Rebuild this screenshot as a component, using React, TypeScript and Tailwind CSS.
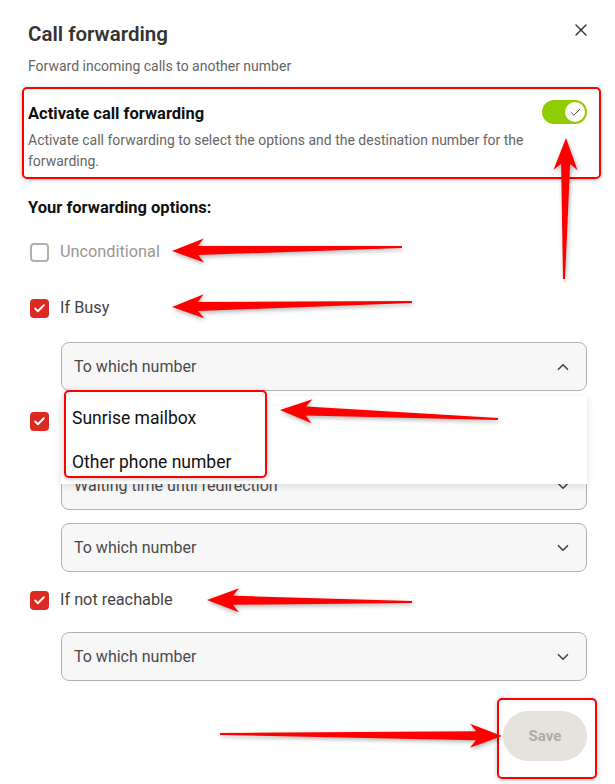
import { X, ChevronDown, ChevronUp, Check } from "lucide-react";

function arrowPoints(tx: number, ty: number, ex: number, ey: number) {
  const dx = ex - tx;
  const dy = ey - ty;
  const len = Math.hypot(dx, dy);
  const ux = dx / len;
  const uy = dy / len;
  const nx = -uy;
  const ny = ux;
  const p = (d: number, w: number) => `${tx + ux * d + nx * w},${ty + uy * d + ny * w}`;
  return [
    p(0, 0),
    p(32, 12),
    p(26, 4.5),
    p(len, 1),
    p(len, -1),
    p(26, -4.5),
    p(32, -12),
  ].join(" ");
}

const arrows = [
  [172, 251, 402, 247],
  [172, 307, 412, 302],
  [280, 410, 498, 419],
  [207, 600, 412, 602],
  [502, 736, 220, 734],
  [566, 138, 564, 279],
];

function Checkbox({ checked }: { checked: boolean }) {
  return checked ? (
    <span className="flex h-[19px] w-[19px] items-center justify-center rounded-[4px] bg-[#dc2a22]">
      <Check size={13} strokeWidth={3.5} className="text-white" />
    </span>
  ) : (
    <span className="h-[19px] w-[19px] rounded-[4px] border-2 border-[#b3b0ab] bg-white" />
  );
}

function Select({ label, open }: { label: string; open?: boolean }) {
  return (
    <div className="flex h-[49px] items-center justify-between rounded-lg border-[1.5px] border-[#b5b2ad] bg-[#f7f7f7] pl-[12px] pr-[14px]">
      <span className="text-[16px] text-[#4a4a4a]">{label}</span>
      {open ? (
        <ChevronUp size={18} strokeWidth={2.2} className="text-[#444]" />
      ) : (
        <ChevronDown size={18} strokeWidth={2.2} className="text-[#444]" />
      )}
    </div>
  );
}

function Option({ label, checked, muted }: { label: string; checked: boolean; muted?: boolean }) {
  return (
    <div className="flex h-6 items-center gap-[11px] pl-[2px]">
      <Checkbox checked={checked} />
      <span className={muted ? "text-[16.3px] text-[#9a9794]" : "text-[16.3px] text-[#444]"}>{label}</span>
    </div>
  );
}

export default function App() {
  return (
    <div
      className="relative h-[784px] w-[615px] overflow-hidden bg-white px-[28px] pt-[20px]"
      style={{ fontFamily: "Roboto, 'Liberation Sans', sans-serif" }}
    >
      <div className="flex items-start justify-between">
        <h1 className="text-[20.5px] leading-7 font-semibold text-[#333]">Call forwarding</h1>
        <X size={20} strokeWidth={1.6} className="mt-[0px] mr-[-4px] text-[#333]" />
      </div>
      <p className="mt-[8px] text-[14px] leading-5 text-[#666]">Forward incoming calls to another number</p>

      <div className="mt-[24px] flex h-6 items-center justify-between">
        <span className="pt-1 text-[16.5px] font-bold text-[#111]">Activate call forwarding</span>
        <span className="flex h-6 w-[45px] items-center justify-end rounded-full bg-[#8fcd00] pr-[2px]">
          <span className="flex h-5 w-5 items-center justify-center rounded-full bg-white">
            <Check size={13} strokeWidth={1.6} className="text-[#333]" />
          </span>
        </span>
      </div>
      <p className="mt-[6px] pr-[40px] text-[14px] leading-[21px] text-[#666]">
        Activate call forwarding to select the options and the destination number for the forwarding.
      </p>

      <h2 className="mt-[24px] text-[16.5px] leading-6 font-bold text-[#111]">Your forwarding options:</h2>

      <div className="mt-[20px]">
        <Option label="Unconditional" checked={false} muted />
      </div>
      <div className="mt-[32px]">
        <Option label="If Busy" checked />
      </div>
      <div className="relative mt-[22px] ml-[33px]">
        <Select label="To which number" open />
        <div className="absolute top-[calc(100%+5px)] right-0 left-0 z-10 bg-white py-0 shadow-[0_2px_8px_rgba(0,0,0,0.12)]">
          <div className="flex h-11 items-center px-[11px] text-[17.5px] text-[#111]">Sunrise mailbox</div>
          <div className="flex h-11 items-center px-[11px] text-[17.5px] text-[#111]">Other phone number</div>
        </div>
      </div>
      <div className="mt-[18px]">
        <Option label="If no answer" checked />
      </div>
      <div className="mt-[28px] ml-[33px] flex flex-col gap-[13px]">
        <Select label="Waiting time until redirection" />
        <Select label="To which number" />
      </div>
      <div className="mt-[16px]">
        <Option label="If not reachable" checked />
      </div>
      <div className="mt-[20px] ml-[33px]">
        <Select label="To which number" />
      </div>
      <div className="mt-[30px] flex justify-end">
        <button className="h-[50px] w-[84px] rounded-full bg-[#e6e3de] text-[15px] font-bold text-[#aeaba6]">
          Save
        </button>
      </div>

      {/* annotations */}
      <div className="pointer-events-none absolute top-[87px] left-[22px] z-20 h-[92px] w-[579px] rounded-[5px] border-2 border-[#ff0000] shadow-[0_1px_4px_rgba(0,0,0,0.25)]" />
      <div className="pointer-events-none absolute top-[390px] left-[64px] z-20 h-[88px] w-[203px] rounded-[5px] border-2 border-[#ff0000] shadow-[0_1px_4px_rgba(0,0,0,0.25)]" />
      <div className="pointer-events-none absolute top-[698px] left-[497px] z-20 h-[81px] w-[100px] rounded-[5px] border-2 border-[#ff0000] shadow-[0_1px_4px_rgba(0,0,0,0.25)]" />
      <svg
        className="pointer-events-none absolute inset-0 z-30 drop-shadow-[1px_2px_2px_rgba(0,0,0,0.3)]"
        width="615"
        height="784"
        viewBox="0 0 615 784"
      >
        {arrows.map((a, i) => (
          <polygon key={i} points={arrowPoints(a[0], a[1], a[2], a[3])} fill="#ff0000" />
        ))}
      </svg>
    </div>
  );
}
